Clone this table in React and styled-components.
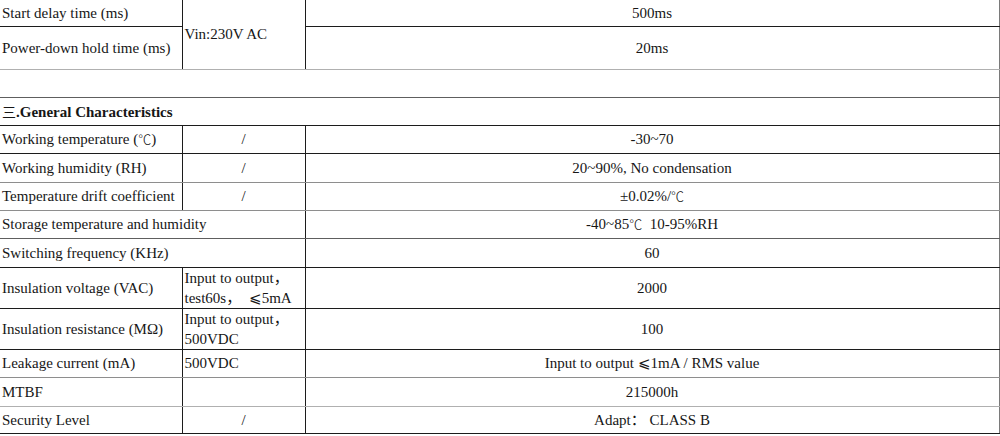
import React from "react";
import styled, { createGlobalStyle } from "styled-components";

const Global = createGlobalStyle`
  html, body { margin: 0; padding: 0; background: #fff; }
  body { font-family: "Liberation Serif", "DejaVu Serif", "Noto Sans CJK SC", serif; color: #161616; }
`;

const DARK = "#1c1c1c";
const MID = "#5e5e5e";
const GREY = "#8e8e8e";
const LIGHT = "#b0b0b0";
const VLINE = "#1c1c1c";
const RIGHT = "#7a7a7a";

const Table = styled.table`
  border-collapse: collapse;
  table-layout: fixed;
  width: 999px;
  font-size: 15px;
  line-height: 20px;
`;

const Row = styled.tr`
  height: ${(p) => p.$h}px;
`;

const Cell = styled.td`
  padding: 0 0 0 ${(p) => (p.$center ? 0 : 2)}px;
  text-align: ${(p) => (p.$center ? "center" : "left")};
  vertical-align: middle;
  white-space: nowrap;
  overflow: hidden;
  border-bottom: 1px solid ${(p) => p.$line};
  border-right: 1px solid ${(p) => p.$right || VLINE};
  border-top: none;
  border-left: none;
  font-weight: ${(p) => (p.$bold ? 700 : 400)};
`;

const Han = styled.span`
  font-family: "Noto Sans CJK SC", sans-serif;
  font-weight: 400;
  font-size: 14px;
`;

const Deg = styled.span`
  font-family: "Noto Sans CJK SC", sans-serif;
  font-weight: 300;
  font-size: 13px;
`;

const simpleRows = [
  { label: "Switching frequency (KHz)", value: "60", h: 29, line: DARK },
];

export default function App() {
  return (
    <>
      <Global />
      <Table>
        <colgroup>
          <col style={{ width: 182 }} />
          <col style={{ width: 123 }} />
          <col style={{ width: 694 }} />
        </colgroup>
        <tbody>
          <Row $h={26}>
            <Cell $line={DARK}>Start delay time (ms)</Cell>
            <Cell rowSpan={2} $line={LIGHT}>Vin:230V AC</Cell>
            <Cell $center $line={DARK} $right={RIGHT}>500ms</Cell>
          </Row>
          <Row $h={43}>
            <Cell $line={LIGHT}>Power-down hold time (ms)</Cell>
            <Cell $center $line={LIGHT} $right={RIGHT}>20ms</Cell>
          </Row>
          <Row $h={28}>
            <Cell colSpan={3} $line={MID} $right={RIGHT}></Cell>
          </Row>
          <Row $h={28}>
            <Cell colSpan={3} $line={DARK} $right={RIGHT} $bold>
              <Han>三</Han>.General Characteristics
            </Cell>
          </Row>
          <Row $h={28}>
            <Cell $line={DARK}>Working temperature (<Deg>℃</Deg>)</Cell>
            <Cell $center $line={DARK}>/</Cell>
            <Cell $center $line={DARK} $right={RIGHT}>-30~70</Cell>
          </Row>
          <Row $h={29}>
            <Cell $line={GREY}>Working humidity (RH)</Cell>
            <Cell $center $line={GREY}>/</Cell>
            <Cell $center $line={GREY} $right={RIGHT}>20~90%, No condensation</Cell>
          </Row>
          <Row $h={28}>
            <Cell $line={GREY}>Temperature drift coefficient</Cell>
            <Cell $center $line={GREY}>/</Cell>
            <Cell $center $line={GREY} $right={RIGHT}>±0.02%/<Deg>℃</Deg></Cell>
          </Row>
          <Row $h={28}>
            <Cell colSpan={2} $line={MID}>Storage temperature and humidity</Cell>
            <Cell $center $line={MID} $right={RIGHT}>-40~85<Deg>℃</Deg>&nbsp;&nbsp;10-95%RH</Cell>
          </Row>
          {simpleRows.map((r) => (
            <Row key={r.label} $h={r.h}>
              <Cell colSpan={2} $line={r.line}>{r.label}</Cell>
              <Cell $center $line={r.line} $right={RIGHT}>{r.value}</Cell>
            </Row>
          ))}
          <Row $h={41}>
            <Cell $line={DARK}>Insulation voltage (VAC)</Cell>
            <Cell $line={DARK}>
              Input to output，
              <br />
              test60s，&nbsp;&nbsp;⩽5mA
            </Cell>
            <Cell $center $line={DARK} $right={RIGHT}>2000</Cell>
          </Row>
          <Row $h={41}>
            <Cell $line={DARK}>Insulation resistance (MΩ)</Cell>
            <Cell $line={DARK}>
              Input to output，
              <br />
              500VDC
            </Cell>
            <Cell $center $line={DARK} $right={RIGHT}>100</Cell>
          </Row>
          <Row $h={28}>
            <Cell $line={GREY}>Leakage current (mA)</Cell>
            <Cell $line={GREY}>500VDC</Cell>
            <Cell $center $line={GREY} $right={RIGHT}>Input to output ⩽1mA / RMS value</Cell>
          </Row>
          <Row $h={29}>
            <Cell $line={LIGHT}>MTBF</Cell>
            <Cell $line={LIGHT}></Cell>
            <Cell $center $line={LIGHT} $right={RIGHT}>215000h</Cell>
          </Row>
          <Row $h={27}>
            <Cell $line={DARK}>Security Level</Cell>
            <Cell $center $line={DARK}>/</Cell>
            <Cell $center $line={DARK} $right={RIGHT}>Adapt：&nbsp;CLASS B</Cell>
          </Row>
        </tbody>
      </Table>
    </>
  );
}
